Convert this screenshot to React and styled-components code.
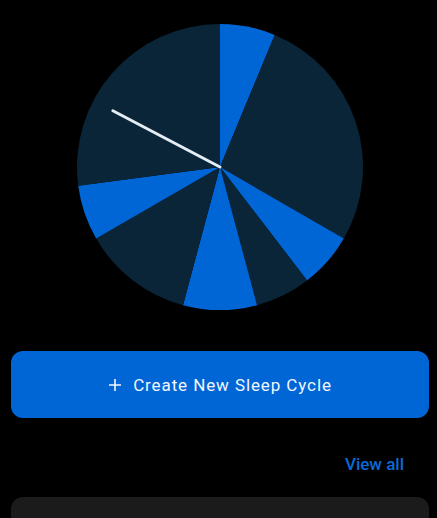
import React from "react";
import styled, { createGlobalStyle } from "styled-components";

const GlobalStyle = createGlobalStyle`
  html, body {
    margin: 0;
    padding: 0;
    background: #000;
  }
  body {
    font-family: Roboto, "Noto Sans", sans-serif;
  }
`;

const Page = styled.div`
  width: 437px;
  height: 518px;
  overflow: hidden;
  background: #000;
  padding: 22px 8px 0 11px;
  box-sizing: border-box;
  display: flex;
  flex-direction: column;
  & > * {
    flex-shrink: 0;
  }
`;

const ChartWrap = styled.div`
  display: flex;
  justify-content: center;
`;

const CreateButton = styled.button`
  margin-top: 39px;
  height: 67px;
  border: none;
  border-radius: 12px;
  background: #0066d6;
  color: #f2f6ff;
  font-family: Roboto, sans-serif;
  font-size: 17px;
  letter-spacing: 0.9px;
  display: flex;
  align-items: center;
  justify-content: center;
  gap: 11px;
  cursor: pointer;
`;

const Header = styled.div`
  display: flex;
  justify-content: flex-end;
  padding: 36px 25px 0 0;
`;

const ViewAll = styled.span`
  color: #0a6ad6;
  font-size: 17px;
  font-weight: 500;
`;

const Card = styled.div`
  margin-top: 23px;
  height: 80px;
  border-radius: 12px;
  background: #1b1b1b;
`;

const segments = [
  { from: 0, to: 22.5, on: true },
  { from: 22.5, to: 120, on: false },
  { from: 120, to: 142.5, on: true },
  { from: 142.5, to: 165, on: false },
  { from: 165, to: 195, on: true },
  { from: 195, to: 240, on: false },
  { from: 240, to: 262.5, on: true },
  { from: 262.5, to: 360, on: false },
];

const R = 143;
const C = 145;

const point = (deg, r = R) => {
  const a = ((deg - 90) * Math.PI) / 180;
  return [C + r * Math.cos(a), C + r * Math.sin(a)];
};

const SleepChart = () => {
  const hand = point(297.7, 121);
  return (
    <svg width="290" height="290" viewBox="0 0 290 290" style={{ display: "block" }}>
      {segments.map((s, i) => {
        const [x1, y1] = point(s.from);
        const [x2, y2] = point(s.to);
        const large = s.to - s.from > 180 ? 1 : 0;
        return (
          <path
            key={i}
            d={`M${C} ${C} L${x1} ${y1} A${R} ${R} 0 ${large} 1 ${x2} ${y2} Z`}
            fill={s.on ? "#0066d6" : "#0b2538"}
          />
        );
      })}
      <line
        x1={C}
        y1={C}
        x2={hand[0]}
        y2={hand[1]}
        stroke="#e4ecf4"
        strokeWidth="3"
        strokeLinecap="round"
      />
    </svg>
  );
};

const PlusIcon = () => (
  <svg width="14" height="14" viewBox="0 0 14 14">
    <path d="M7 1v12M1 7h12" stroke="#f2f6ff" strokeWidth="1.6" />
  </svg>
);

export default function App() {
  return (
    <>
      <GlobalStyle />
      <Page>
        <ChartWrap>
          <SleepChart />
        </ChartWrap>
        <CreateButton>
          <PlusIcon />
          Create New Sleep Cycle
        </CreateButton>
        <Header>
          <ViewAll>View all</ViewAll>
        </Header>
        <Card />
      </Page>
    </>
  );
}
